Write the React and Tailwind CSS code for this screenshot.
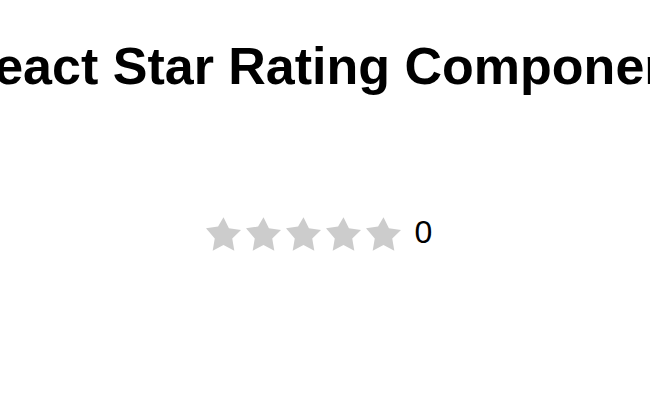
export default function App() {
  const stars = [1, 2, 3, 4, 5];
  const value = 0;

  return (
    <div className="h-[400px] w-full overflow-hidden bg-white font-['Liberation_Sans',Arial,sans-serif] text-black">
      <h1 className="mt-[37px] flex justify-center whitespace-nowrap text-[52px] font-bold leading-[1.15]">
        <span>React Star Rating Component</span>
      </h1>

      <div className="mt-[120px] flex items-start justify-center pr-[12px]">
        <div className="flex gap-[5px]">
          {stars.map((n) => (
            <svg key={n} viewBox="2 2 20 19.02" className="h-[34px] w-[35px] fill-[#cccccc]">
              <polygon points="12,2 15.09,8.26 22,9.27 17,14.14 18.18,21.02 12,17.77 5.82,21.02 7,14.14 2,8.27 8.91,7.26" />
            </svg>
          ))}
        </div>
        <span className="-mt-px ml-[14px] text-[32px] leading-[32px]">{value}</span>
      </div>
    </div>
  );
}
